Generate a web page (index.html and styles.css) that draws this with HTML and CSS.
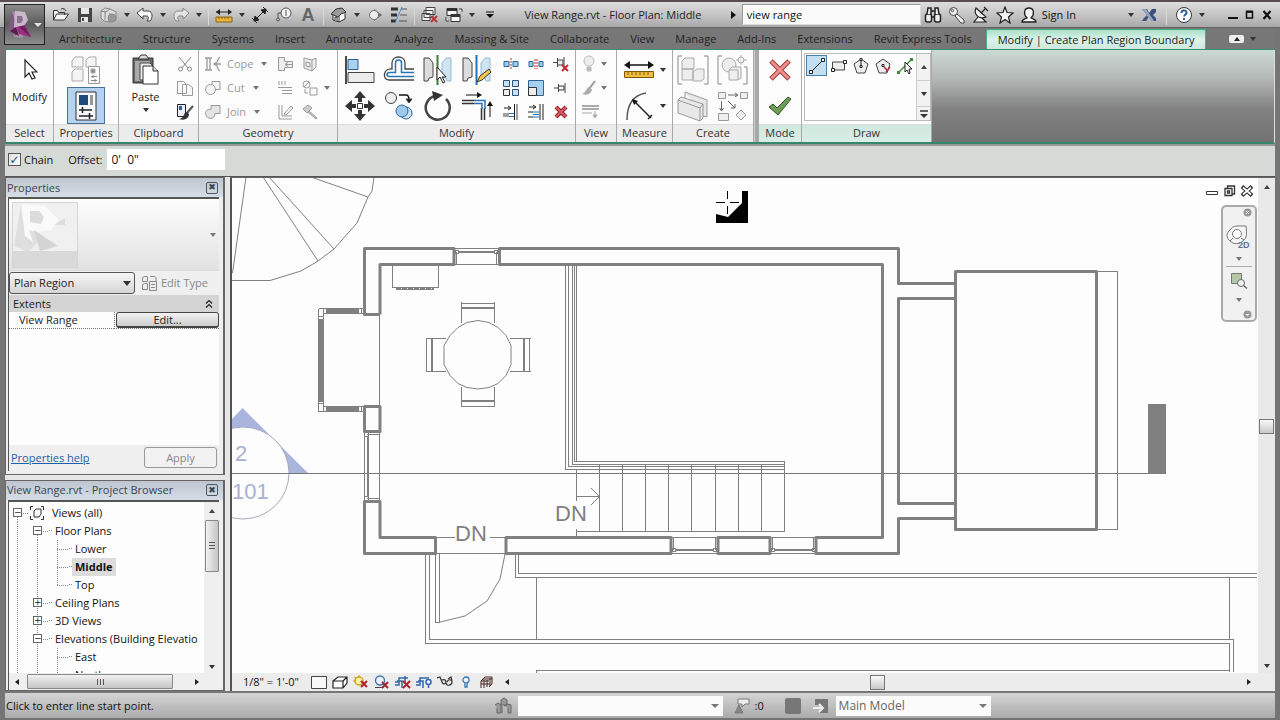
FILE: index.html
```html
<!DOCTYPE html>
<html lang="en">
<head>
<meta charset="utf-8">
<title>View Range.rvt - Floor Plan: Middle</title>
<link rel="stylesheet" href="styles.css">
</head>
<body>
<div class="app">
<button class="app-menu" aria-label="Application menu">
  <svg width="26" height="30" viewBox="0 0 26 30"><path d="M5 2l8-1 3 27-9-1z" fill="#a88fa8"/><path d="M5 2L1 19l8 7 2-8z" fill="#7d5c80"/><path d="M8 1l10 1 3 8-4 6-7 1 3 4-6-4z" fill="#c9b8ca"/><path d="M10 6l5 0 1 4-2 3-4 0z" fill="#8c7090"/><path d="M9 17l9-2 6 12-12-3z" fill="#9a2f80"/><path d="M9 17l3 9-9-5z" fill="#5a1c50"/><path d="M12 17l5-1 7 11z" fill="#6b1959"/></svg>
  <span class="caret light"></span>
</button>

<header class="titlebar">
  <div class="qat">
    <button class="qi" aria-label="Open"><svg width="18" height="16" viewBox="0 0 18 16" fill="none" stroke="#333"><path d="M1.500 13V3.500h4l1 2h6V8M1.500 13l3-6h12l-4 6z" fill="#f5f5f5"/><path d="M9 2c3-1 4 0 5 2"/></svg></button>
    <button class="qi" aria-label="Save"><svg width="16" height="16" viewBox="0 0 16 16"><path d="M1 1h14v14H1z" fill="#444"/><path d="M4 1h8v6H4z" fill="#e6e6e6"/><path d="M4 10h7v5H4z" fill="#e6e6e6"/><path d="M5 11h2v3H5z" fill="#444"/></svg></button>
    <button class="qi" aria-label="Synchronize"><svg width="18" height="18" viewBox="0 0 18 18" fill="#ddd" stroke="#888"><path d="M1 5l4-3 5 1 6 3v8l-6 2-6-1-3-3zM5 5v9M1 5l5 1 4-3M10 7v8"/><circle cx="12" cy="12" r="4" fill="#999"/></svg></button>
    <button class="qc" aria-label="Synchronize options"><span class="caret"></span></button>
    <button class="qi" aria-label="Undo"><svg width="18" height="16" viewBox="0 0 18 16" fill="#f8f8f8" stroke="#444"><path d="M1 6l6-5v3h5c5 0 5 7 2 10h-3c2-3 2-5-1-5H7v3z"/></svg></button>
    <button class="qc" aria-label="Undo list"><span class="caret"></span></button>
    <button class="qi" aria-label="Redo"><svg width="18" height="16" viewBox="0 0 18 16" fill="#e4e4e4" stroke="#888"><path d="M17 6l-6-5v3H6C1 4 1 11 4 14h3c-2-3-2-5 1-5h3v3z"/></svg></button>
    <button class="qc" aria-label="Redo list"><span class="caret"></span></button>
    <span class="qs"></span>
    <button class="qi" aria-label="Measure"><svg width="18" height="16" viewBox="0 0 18 16"><path d="M1 5h15" stroke="#222"/><path d="M1 5l4-3v6zM17 5l-4-3v6z" fill="#222"/><path d="M1 10h16v5H1z" fill="#e8b43c" stroke="#8a6410"/><path d="M4 10v2M7 10v2M10 10v2M13 10v2" stroke="#8a6410"/></svg></button>
    <button class="qc" aria-label="Measure options"><span class="caret"></span></button>
    <button class="qi" aria-label="Aligned dimension"><svg width="18" height="18" viewBox="0 0 18 18" stroke="#222" fill="#222"><path d="M3 15L15 3M1 12l5 5M12 1l5 5"/><path d="M3 15l1-5 4 4zM15 3l-1 5-4-4z"/></svg></button>
    <button class="qi" aria-label="Tag"><svg width="18" height="16" viewBox="0 0 18 16" fill="none" stroke="#555"><circle cx="11" cy="6" r="5" fill="#f4f4f4"/><path d="M11 3v6M6 6H3v5"/><circle cx="3" cy="12.500" r="1.500"/></svg></button>
    <button class="qi" aria-label="Text"><span class="glyph-a">A</span></button>
    <span class="qs"></span>
    <button class="qi" aria-label="Default 3D view"><svg width="18" height="16" viewBox="0 0 18 16" fill="#fafafa" stroke="#333"><path d="M3 6v7l6 2 6-3V6"/><path d="M1 7l5-5 6-1 4 4-5 2-3 3z" fill="#999"/><path d="M9 15V9M5 13v-3h2v4"/></svg></button>
    <button class="qc" aria-label="3D view options"><span class="caret"></span></button>
    <button class="qi" aria-label="Section"><svg width="16" height="14" viewBox="0 0 16 14"><path d="M7 1l8 6-8 6z" fill="#666"/><circle cx="7" cy="7" r="4.500" fill="#eee" stroke="#777"/></svg></button>
    <button class="qi" aria-label="Thin lines"><svg width="18" height="16" viewBox="0 0 18 16"><path d="M1 2h7M1 8h6M1 14h5" stroke="#333" stroke-width="3"/><path d="M11 2h6M10 8h7M9 14h8" stroke="#555"/><path d="M12 0L5 16" stroke="#4a8cc8"/></svg></button>
    <span class="qs"></span>
    <button class="qi" aria-label="Close hidden windows"><svg width="18" height="17" viewBox="0 0 18 17" fill="#f3f3f3" stroke="#444"><path d="M5 1.500h9v7H5zM3 4.500h9v7H3zM1 7.500h8v7H1z"/><path d="M10 10l6 6M16 10l-6 6" stroke="#b8323c" stroke-width="2"/></svg></button>
    <button class="qi" aria-label="Switch windows"><svg width="18" height="16" viewBox="0 0 18 16" fill="#f6f6f6" stroke="#333"><path d="M2 1.500h10v7H2zM6 7.500h9v7H6z"/><path d="M2 3h10M6 9h9" stroke-width="2"/><path d="M1 10v4h3M17 5V2h-3"/></svg></button>
    <button class="qc" aria-label="Window list"><span class="caret"></span></button>
    <button class="qi" aria-label="Customize toolbar"><svg width="8" height="8" viewBox="0 0 8 8"><path d="M0 1h8" stroke="#111"/><path d="M0 3h8L4 7z" fill="#111"/></svg></button>
  </div>
  <h1 class="doc-title">View Range.rvt - Floor Plan: Middle</h1>
  <button class="expand" aria-label="Expand search"><svg width="6" height="8" viewBox="0 0 6 8"><path d="M1 0l5 4-5 4z" fill="#111"/></svg></button>
  <input class="search" type="text" value="view range" aria-label="Search">
  <div class="info">
    <button class="qi" aria-label="Find"><svg width="18" height="18" viewBox="0 0 18 18" fill="#eee" stroke="#222" stroke-width="1.500"><rect x="1.500" y="8" width="6" height="8" rx="2"/><rect x="10.500" y="8" width="6" height="8" rx="2"/><path d="M3 8l1-6h3v6M15 8l-1-6h-3v6M7 5h4M7 11h4"/></svg></button>
    <button class="qi" aria-label="Subscription"><svg width="18" height="18" viewBox="0 0 18 18" fill="#f2f2f2" stroke="#444"><path d="M8 9l1-1 7 6v3h-3l-6-7z"/><circle cx="5.500" cy="5.500" r="4"/><circle cx="4.500" cy="4.500" r="1.200"/></svg></button>
    <button class="qi" aria-label="Communication"><svg width="18" height="18" viewBox="0 0 18 18" fill="#f2f2f2" stroke="#222" stroke-width="1.200"><path d="M6 11l-4 5h12l-4-4"/><path d="M4 2c-3 6 3 12 10 9z"/><path d="M9 7l4-4M12 1l4 4"/></svg></button>
    <button class="qi" aria-label="Favorites"><svg width="18" height="18" viewBox="0 0 18 18" fill="#f5f5f5" stroke="#222" stroke-width="1.200"><path d="M9 1l2 5.500 6 .5-4.500 4L14 17l-5-3.500L4 17l1.500-6L1 7l6-.5z"/></svg></button>
    <button class="sign"><svg width="18" height="18" viewBox="0 0 18 18" fill="#f5f5f5" stroke="#222" stroke-width="1.300"><path d="M2 16c0-3 3-3 5-4-4-4-3-10 2-10s6 6 2 10c2 1 5 1 5 4z"/></svg>Sign In</button>
    <button class="qc push" aria-label="Account options"><span class="caret"></span></button>
    <button class="qi" aria-label="Exchange"><svg width="16" height="14" viewBox="0 0 16 14"><path d="M1 1h5l2 4 3-4h4v3l-3 3 3 3v3h-4L8 9l-3 4H1l2-3 3-3z" fill="#3d527c"/><path d="M1 1h4l8 12h-3z" fill="#93a3c0"/></svg></button>
    <span class="qs"></span>
    <button class="qi" aria-label="Help"><svg width="18" height="18" viewBox="0 0 18 18"><circle cx="9" cy="9" r="7.500" fill="#fff" stroke="#333"/><path d="M6.500 7c0-4 5.500-3 5 0-.2 1.500-2.300 1.500-2.300 3.500M9 12v2" fill="none" stroke="#2b5c9b" stroke-width="2"/></svg></button>
    <button class="qc" aria-label="Help options"><span class="caret"></span></button>
    <button class="win first" aria-label="Minimize"><svg width="10" height="12"><path d="M0 9h10" stroke="#111" stroke-width="2"/></svg></button>
    <button class="win" aria-label="Maximize"><svg width="10" height="12"><path d="M1.500 3h6v6h-6z" fill="none" stroke="#111" stroke-width="1.500"/><path d="M1 2.500h7" stroke="#111" stroke-width="2"/></svg></button>
    <button class="win" aria-label="Close"><svg width="10" height="12"><path d="M1.500 2l7 8M8.500 2l-7 8" stroke="#111" stroke-width="2.200"/></svg></button>
  </div>
</header>

<nav class="tabs">
  <button>Architecture</button><button>Structure</button><button>Systems</button><button>Insert</button><button>Annotate</button><button>Analyze</button><button>Massing &amp; Site</button><button>Collaborate</button><button>View</button><button>Manage</button><button>Add-Ins</button><button>Extensions</button><button>Revit Express Tools</button><button class="active">Modify | Create Plan Region Boundary</button>
  <button class="ribbon-toggle" aria-label="Minimize ribbon"><span class="pill"><svg width="6" height="4"><path d="M0 4l3-4 3 4z" fill="#222"/></svg></span><span class="caret"></span></button>
</nav>

<section class="ribbon">
  <div class="panel p-select"><div class="body">
    <button class="tall"><svg width="16" height="24" viewBox="0 0 16 24" fill="#fff" stroke="#222" stroke-width="1.200"><path d="M3 2v17l4-4 3 6 3-1-3-6h5z"/></svg><span>Modify</span></button>
  </div><h2>Select</h2></div>

  <div class="panel p-props"><div class="body rows2">
    <button aria-label="Type properties"><svg width="30" height="30" viewBox="0 0 30 30" fill="#f4f4f4" stroke="#aaa"><path d="M1 6l3-4h8v10H1zM15 5l3-3h7v10H15zM1 17l3-3h8v12H1z"/><path d="M17.500 11.500h11v17h-11z" fill="#fff" stroke="#999"/><path d="M20 14h4v4h-4z" fill="#888"/><path d="M20 21.500h6M20 25.500h6M22 20v3M24 24v3" stroke="#888"/></svg></button>
    <button class="on" aria-label="Properties"><svg width="22" height="30" viewBox="0 0 22 30"><path d="M1 1h20v28H1z" fill="#f7f9fb" stroke="#333"/><path d="M4 4h9v10H4z" fill="#1d4a7d"/><path d="M15 4h3v10h-3z" fill="#999"/><path d="M4 19h13M4 25h14M7.500 16v6M14.500 22v6" stroke="#222" stroke-width="1.500"/></svg></button>
  </div><h2>Properties</h2></div>

  <div class="panel p-clip"><div class="body">
    <button class="tall"><svg width="28" height="32" viewBox="0 0 28 32"><path d="M1 4h20v25H1z" fill="#666" stroke="#333"/><path d="M6 5l3-4h5l3 4z" fill="#ddd" stroke="#333"/><path d="M3 7h15v20H3z" fill="#aaa"/><path d="M8 9h10l3 3v14H8z" fill="#eee" stroke="#444"/><path d="M11 12h10l5 5v13H11z" fill="#fff" stroke="#333"/><path d="M21 12v5h5" fill="#ddd" stroke="#333"/></svg><span>Paste</span><span class="caret"></span></button>
    <div class="rows3">
      <button aria-label="Cut"><svg width="16" height="16" viewBox="0 0 16 16" fill="none" stroke="#888"><path d="M2 1l9 11M14 1L5 12"/><circle cx="3.500" cy="13" r="2"/><circle cx="12.500" cy="13" r="2"/></svg></button>
      <button aria-label="Copy"><svg width="18" height="16" viewBox="0 0 18 16" fill="#fafafa" stroke="#999"><path d="M1.500 1.500h6l3 3v9h-9zM6.500 4.500h6l4 3v8h-10z"/></svg></button>
      <button aria-label="Match type"><svg width="18" height="18" viewBox="0 0 18 18"><path d="M1.500 1.500h8v12h-8z" fill="#eef" stroke="#222"/><path d="M3 3h3v4H3z" fill="#2e5c95"/><path d="M17 3l-7 8" stroke="#555" stroke-width="2"/><path d="M11 9c-4 0-2 6-8 7 6 2 10-1 10-5z" fill="#333"/></svg></button>
    </div>
  </div><h2>Clipboard</h2></div>

  <div class="panel p-geom"><div class="body dim">
    <div class="rows3 words">
      <button><svg width="18" height="16" viewBox="0 0 18 16" fill="none" stroke="#999" stroke-width="1.300"><path d="M1 2h7M1 14h7M3 2v12M6 2v12M16 1c-3 2-2 4-3 5l-3 2 3 2c1 1 0 4 3 5M17 8h-6"/></svg><span>Cope</span><i class="caret"></i></button>
      <button><svg width="18" height="16" viewBox="0 0 18 16" fill="#f4f4f4" stroke="#999"><path d="M8 1.500h8v8H8z"/><circle cx="6.500" cy="9.500" r="5"/></svg><span>Cut</span><i class="caret"></i></button>
      <button><svg width="18" height="16" viewBox="0 0 18 16" fill="#e4e4e4" stroke="#999"><path d="M7 1.500h9v8h-5c0 7-9 6-9.500 0 0-3 3-5 5.500-4z"/></svg><span>Join</span><i class="caret"></i></button>
    </div>
    <div class="rows3">
      <button aria-label="Join roof"><svg width="16" height="16" viewBox="0 0 16 16" fill="#eee" stroke="#999"><path d="M1.500 1.500h6v4h8v6h-8v3h-6zM15 8.500H8l3-2M8 8.500l3 2"/></svg></button>
      <button aria-label="Beam joins"><svg width="16" height="16" viewBox="0 0 16 16" fill="none" stroke="#999"><path d="M2 1v4M5 1v4M8 1v4M1 7.500h14M5 10.500h10M5 13.500h10"/></svg></button>
      <button aria-label="Wall joins"><svg width="16" height="16" viewBox="0 0 16 16" fill="none" stroke="#999"><path d="M2 1v14h13M5 1v11h10M7 10l7-8 2 2-7 7z"/></svg></button>
    </div>
    <div class="rows3">
      <button aria-label="Split face"><svg width="16" height="16" viewBox="0 0 16 16" fill="#eee" stroke="#999"><path d="M2 2l8 2 4-2v9l-4 4-8-3zM10 4v11M4 6l4 1v4l-4-1z"/></svg></button>
      <button aria-label="Demolish"><svg width="16" height="16" viewBox="0 0 16 16" fill="#fafafa" stroke="#999"><circle cx="4.500" cy="4.500" r="3.500"/><path d="M2 7l5-5M3 9v4h3M8 8h7v7H8z"/></svg></button>
      <button aria-label="Paint"><svg width="16" height="16" viewBox="0 0 16 16" fill="#ccc" stroke="#999"><path d="M1 5l5-4 4 3-5 5zM7 7l8 7-1 1-8-7z"/></svg></button>
    </div>
    <div class="rows3 narrow"><i></i><button aria-label="Demolish options"><span class="caret grey"></span></button><i></i></div>
  </div><h2>Geometry</h2></div>

  <div class="panel p-modify"><div class="body">
    <div class="big4">
      <button aria-label="Align"><svg width="32" height="30" viewBox="0 0 32 30"><path d="M2 1v28" stroke="#111" stroke-width="1.500"/><path d="M4 4.500h10v10H4z" fill="#a9d3f0" stroke="#2c5f8e"/><path d="M4 17.500h26v10H4z" fill="#ececec" stroke="#444"/></svg></button>
      <button aria-label="Offset"><svg width="32" height="30" viewBox="0 0 32 30" fill="none"><path d="M31 14h-9V8c0-8-13-8-13 0v6C0 13-1 25 6 25h25" stroke="#444" stroke-width="1.300"/><path d="M31 17.500H18.500V8c0-4-6-4-6 0v9.500H7c-4 0-4 4 0 4h24" stroke="#2474b8" stroke-width="1.500"/></svg></button>
      <button aria-label="Mirror - pick axis"><svg width="32" height="30" viewBox="0 0 32 30"><path d="M2 3h5l4 5v14l-4 1-1 3H2z" fill="#ddd" stroke="#444"/><path d="M29 3h-5l-4 5v14l4 1 1 3h4z" fill="#cfe4f3" stroke="#9bbbd2"/><path d="M15.500 0v30" stroke="#3b7d39" stroke-width="2"/><path d="M15 12v13l3-3 3 6 2-1-3-5h4z" fill="#fff" stroke="#222"/></svg></button>
      <button aria-label="Mirror - draw axis"><svg width="32" height="30" viewBox="0 0 32 30"><path d="M2 3h5l4 5v14l-4 1-1 3H2z" fill="#ddd" stroke="#444"/><path d="M29 3h-5l-4 5v14l4 1 1 3h4z" fill="#cfe4f3" stroke="#9bbbd2"/><path d="M15.500 0v30" stroke="#2474b8" stroke-width="2"/><path d="M16 27l3-6 9-7 2 3-9 8z" fill="#f2c74a" stroke="#333"/></svg></button>
      <button aria-label="Move"><svg width="32" height="32" viewBox="0 0 32 32" fill="#333"><path d="M16 1l6 7h-4v4h-4V8h-4zM16 31l6-7h-4v-4h-4v4h-4zM1 16l7-6v4h4v4H8v4zM31 16l-7-6v4h-4v4h4v4z"/><path d="M13.500 13.500h5v5h-5z" fill="#fff" stroke="#333"/></svg></button>
      <button aria-label="Copy"><svg width="32" height="30" viewBox="0 0 32 30" stroke="#444"><circle cx="8" cy="7" r="5.500" fill="#eee"/><circle cx="23" cy="22" r="6" fill="#cde4f5" stroke="#2c6596"/><circle cx="19" cy="20" r="6" fill="#9dcaeb" stroke="#2c6596"/><path d="M16 4h7c2 0 3 2 3 5" fill="none" stroke="#111" stroke-width="1.500"/><path d="M23 8h6l-3 4z" fill="#111"/></svg></button>
      <button aria-label="Rotate"><svg width="32" height="32" viewBox="0 0 32 32"><path d="M24 9A12 12 0 1 1 13 6" fill="none" stroke="#444" stroke-width="2.500"/><path d="M10 1l11 4-9 6z" fill="#333"/></svg></button>
      <button aria-label="Trim to corner"><svg width="32" height="30" viewBox="0 0 32 30" fill="none"><path d="M1 9.500h12M1 12.500h12M20.500 17v12M23.500 17v12" stroke="#333" stroke-width="1.500"/><path d="M13 9.500h11V18M13 12.500h8V18" stroke="#2474b8" stroke-width="1.500"/><path d="M5 4h12M29 26V14" stroke="#111"/><path d="M16 1l5 3-5 3zM26 15l3-5 3 5z" fill="#111"/></svg></button>
    </div>
    <div class="small3">
      <button aria-label="Split element"><svg width="16" height="12" viewBox="0 0 16 12" fill="#9fcbed" stroke="#2d6495"><path d="M1 3.500h5v5H1zM10 3.500h5v5h-5z"/><path d="M8 0v12" stroke="#c02929" stroke-dasharray="2 1"/></svg></button>
      <button aria-label="Split with gap"><svg width="16" height="12" viewBox="0 0 16 12" fill="#9fcbed" stroke="#2d6495"><path d="M1 3.500h4v5H1zM11 3.500h4v5h-4z"/><path d="M7 1v10M9 1v10" stroke="#c02929" stroke-dasharray="2 1"/></svg></button>
      <button aria-label="Unpin"><svg width="16" height="16" viewBox="0 0 16 16" fill="#eee" stroke="#444"><path d="M0 6.500h4M4.500 2v9M5 4h5v5H5M11 1v10"/><path d="M9 9l6 6M15 9l-6 6" stroke="#c02933" stroke-width="2"/></svg></button>
      <button aria-label="Array"><svg width="16" height="16" viewBox="0 0 16 16" fill="#c6e1f5" stroke="#2a5177"><path d="M.5.5h6v6h-6zM9.500.5h6v6h-6zM9.500 9.500h6v6h-6z"/><path d="M.5 9.500h6v6h-6z" fill="#eee" stroke="#333"/></svg></button>
      <button aria-label="Scale"><svg width="16" height="16" viewBox="0 0 16 16"><path d="M.5.5h15v15H.5z" fill="#a6d0ef" stroke="#2d6495"/><path d="M.5 7.500h8v8h-8z" fill="#eee" stroke="#333"/></svg></button>
      <button aria-label="Pin"><svg width="14" height="12" viewBox="0 0 14 12" fill="#eee" stroke="#444"><path d="M0 6h4M4.500 2v8M5 4h5v4H5M11 1v10"/></svg></button>
      <button aria-label="Extend single"><svg width="16" height="16" viewBox="0 0 16 16" fill="none" stroke="#222"><path d="M1 4h6M5 2l3 2-3 2M11.500 0v16"/><path d="M14 0v16M0 10h6M0 12h6" stroke="#444"/><path d="M6 9.500h5M6 12.500h5" stroke="#2474b8"/></svg></button>
      <button aria-label="Extend multiple"><svg width="16" height="16" viewBox="0 0 16 16" fill="none" stroke="#222"><path d="M1 3h6M5 1l3 2-3 2M12 0v16M15 0v16M0 8h5M0 13h5"/><path d="M5 8h6M5 10.500h6M5 13h6" stroke="#2474b8"/></svg></button>
      <button aria-label="Delete"><svg width="14" height="14" viewBox="0 0 14 14"><path d="M2 2l10 10M12 2L2 12" stroke="#8f1d28" stroke-width="4"/><path d="M2 2l10 10M12 2L2 12" stroke="#de5b62" stroke-width="2"/></svg></button>
    </div>
  </div><h2>Modify</h2></div>

  <div class="panel p-view"><div class="body dim">
    <div class="rows3 words">
      <button aria-label="Hide"><svg width="14" height="18" viewBox="0 0 14 18" fill="#eee" stroke="#bbb"><circle cx="7" cy="6" r="5"/><path d="M5 12h4v4H5z" fill="#bbb"/></svg><i class="caret"></i></button>
      <button aria-label="Override"><svg width="14" height="16" viewBox="0 0 14 16"><path d="M13 1L7 9" stroke="#999" stroke-width="2"/><path d="M8 7c-4 0-3 5-8 7 6 2 9-1 10-4z" fill="#aaa"/></svg><i class="caret"></i></button>
      <button aria-label="Linework"><svg width="18" height="16" viewBox="0 0 18 16" stroke="#aaa" fill="#aaa"><path d="M0 2h17M0 5h17" stroke-width="2"/><path d="M0 9h10M13 7v5M11 11h4l-2 3z"/></svg></button>
    </div>
  </div><h2>View</h2></div>

  <div class="panel p-measure"><div class="body rows2">
    <button aria-label="Measure between"><svg width="30" height="20" viewBox="0 0 30 20"><path d="M2 5h26" stroke="#111" stroke-width="1.500"/><path d="M0 5l6-4v8zM30 5l-6-4v8z" fill="#111"/><path d="M.5 11.500h29v6H.5z" fill="#f0bd3e" stroke="#7c5a0d"/><path d="M4 12v3M8 12v3M12 12v3M16 12v3M20 12v3M24 12v3" stroke="#7c5a0d"/></svg><span class="caret"></span></button>
    <button aria-label="Radial dimension"><svg width="30" height="30" viewBox="0 0 30 30"><path d="M3 29C3 13 10 4 22 2" fill="none" stroke="#555" stroke-width="1.500"/><path d="M9 9l18 18M24 28l4-4" stroke="#222" stroke-width="1.500"/><path d="M8 8l6 2-4 4z" fill="#111"/></svg><span class="caret"></span></button>
  </div><h2>Measure</h2></div>

  <div class="panel p-create"><div class="body big2 dim">
    <button aria-label="Create assembly"><svg width="32" height="30" viewBox="0 0 32 30" fill="#eee" stroke="#aaa"><path d="M5 1H1v28h4M27 1h4v28h-4" fill="none" stroke="#888"/><path d="M5 6l3-3h9v11H5zM5 14h11v11H5zM16 17l4-3h7v10l-3 2h-8z"/></svg></button>
    <button aria-label="Create parts"><svg width="32" height="30" viewBox="0 0 32 30" fill="#eee" stroke="#aaa"><path d="M5 1H1v28h4M27 12h3v17h-4" fill="none" stroke="#888"/><circle cx="12" cy="10" r="7"/><path d="M12 15l3-3h9v11l-3 2h-9zM12 15h9v10"/><circle cx="24" cy="5" r="3"/><path d="M24 0v2M24 8v2M19 5h2M27 5h3"/></svg></button>
    <button aria-label="Create group"><svg width="32" height="32" viewBox="0 0 32 32" fill="#e8e8e8" stroke="#999"><path d="M8 2l22 8v17l-4-1M1 10l3-3 22 7v14l-3 3-22-8zM1 10l22 8v13M23 18l3-4M8 2v6"/></svg></button>
    <button aria-label="Create similar"><svg width="32" height="30" viewBox="0 0 32 30" fill="#eee" stroke="#999"><path d="M1.500 1.500h7v6h-7zM23.500 1.500h7v6h-7zM1.500 22.500h10v7h-10zM24 19l5 5-5 5-5-5z"/><path d="M11 4h9M18 2l3 2-3 2M4.500 10v9M2.500 17l2 3 2-3M11 10l7 7M18 13v4h-4" stroke="#666"/></svg></button>
  </div><h2>Create</h2></div>
  <div class="split"></div>

  <div class="panel p-mode ctx"><div class="body rows2">
    <button aria-label="Cancel edit mode"><svg width="24" height="24" viewBox="0 0 24 24"><path d="M3 3l18 18M21 3L3 21" stroke="#9e3b3f" stroke-width="5"/><path d="M3.500 3.500l17 17M20.500 3.500l-17 17" stroke="#f08d8d" stroke-width="3"/></svg></button>
    <button aria-label="Finish edit mode"><svg width="24" height="20" viewBox="0 0 24 20"><path d="M1 11l4-3 4 4L20 1l3 2L10 19z" fill="#6c9c55" stroke="#33532a"/></svg></button>
  </div><h2>Mode</h2></div>

  <div class="panel p-draw ctx"><div class="body">
    <div class="gallery">
      <div class="shapes">
      <button class="on" aria-label="Line"><svg width="16" height="16" viewBox="0 0 16 16"><path d="M1 15L15 1" stroke="#222"/><path d="M.5 12.500h3v3h-3zM12.500.5h3v3h-3z" fill="#fff" stroke="#222"/></svg></button>
      <button aria-label="Rectangle"><svg width="16" height="14" viewBox="0 0 16 14"><path d="M1.500 3h12v8h-12z" fill="#eee" stroke="#444"/><path d="M.5 9.500h3v3h-3zM12.500 1.500h3v3h-3z" fill="#fff" stroke="#222"/></svg></button>
      <button aria-label="Inscribed polygon"><svg width="16" height="16" viewBox="0 0 16 16"><path d="M8 1l7 5-3 9H4L1 6z" fill="#eee" stroke="#444"/><path d="M8 2v6" stroke="#222"/><path d="M7 7.500h2v2H7zM7 .5h2v2H7z" fill="#fff" stroke="#222"/></svg></button>
      <button aria-label="Circumscribed polygon"><svg width="16" height="16" viewBox="0 0 16 16"><path d="M8 1l7 5-3 9H4L1 6z" fill="#eee" stroke="#444"/><path d="M7 6.500h2v2H7z" fill="#fff" stroke="#222"/><path d="M9 9l4 4M11 14l4-5" stroke="#b22a35" stroke-width="1.500"/></svg></button>
      <button aria-label="Pick lines"><svg width="16" height="16" viewBox="0 0 16 16"><path d="M1 15L15 1" stroke="#3b8a36" stroke-width="1.500"/><path d="M0 13h3v3H0zM13 0h3v3h-3z" fill="#3b8a36"/><path d="M8 4v10l2-2 2 4 1-1-1-4h3z" fill="#fff" stroke="#222"/></svg></button>
      </div>
      <div class="gscroll">
        <button aria-label="Scroll up"><i class="caret up"></i></button>
        <button aria-label="Scroll down"><i class="caret"></i></button>
        <button aria-label="More"><svg width="8" height="8" viewBox="0 0 8 8"><path d="M0 1h8" stroke="#333" stroke-width="1.500"/><path d="M0 4h8L4 8z" fill="#333"/></svg></button>
      </div>
    </div>
  </div><h2>Draw</h2></div>
</section>

<section class="options">
  <label class="chk"><input type="checkbox" checked><span>Chain</span></label>
  <label class="off" for="offset">Offset:</label><input id="offset" type="text" value="0'  0&quot;">
</section>

<main class="work">
  <aside class="dock">
    <section class="palette props">
      <header><h2>Properties</h2><button aria-label="Close properties">✖</button></header>
      <div class="frame">
        <div class="preview">
          <svg width="66" height="66" viewBox="0 0 66 66"><path d="M0 0h66v66H0z" fill="#f0f0f0"/><path d="M9 2L2 44l14 6 12-12z" fill="#dfdfdf"/><path d="M9 2l24 2 14 14-8 10-14 2-8-2 4 12-8-6z" fill="#fafafa"/><path d="M18 9h9l5 6-3 7-11-2z" fill="#dcdcdc"/><path d="M22 28l24 16-18 5z" fill="#d4d4d4"/><path d="M42 23l11-7v7z" fill="#dedede"/><path d="M0 49h66v17H0z" fill="#d9d9d9"/><path d="M.5.5h65v65H.5z" fill="none" stroke="#d6d6d6"/></svg>
          <span class="caret grey"></span>
        </div>
        <div class="typebar">
          <span class="combo"><select aria-label="Type filter"><option>Plan Region</option></select><i class="caret"></i></span>
          <button class="edit-type" disabled><svg width="16" height="16" viewBox="0 0 16 16" fill="#eee" stroke="#888"><path d="M1.500 2.500l2-1h3v5h-5zM9 1.500h5l1 1v4H9M1.500 9.500l2-1h3v6h-5zM8.500 6.500h7v9h-7zM10 9.500h4M10 12.500h4"/></svg>Edit Type</button>
        </div>
        <div class="group"><span>Extents</span><svg width="8" height="8" viewBox="0 0 8 8" fill="none" stroke="#222" stroke-width="1.200"><path d="M1 3.500l3-3 3 3M1 7.500l3-3 3 3"/></svg></div>
        <div class="prop"><span>View Range</span><div><button>Edit...</button></div></div>
        <div class="foot"><a href="#help">Properties help</a><button disabled>Apply</button></div>
      </div>
    </section>

    <section class="palette browser">
      <header><h2>View Range.rvt - Project Browser</h2><button aria-label="Close browser">✖</button></header>
      <div class="frame">
        <div class="treewrap">
          <ul class="tree">
            <li><i class="c start h"><b class="bx">−</b></i><svg class="vi" width="14" height="14" viewBox="0 0 14 14" fill="none" stroke="#333"><path d="M3 .5H.5V4M11 .5h2.500V4M.5 10v3.500H3M13.500 10v3.500H11M4 5l2-2h5v5l-2 3H4z"/></svg><span>Views (all)</span></li>
            <li><i class="c v"></i><i class="c start h"><b class="bx">−</b></i><i class="t"></i><span>Floor Plans</span></li>
            <li><i class="c v"></i><i class="c v"></i><i class="c v h"></i><i class="s"></i><span>Lower</span></li>
            <li><i class="c v"></i><i class="c v"></i><i class="c v h"></i><i class="s"></i><span class="cur">Middle</span></li>
            <li><i class="c v"></i><i class="c v"></i><i class="c last h"></i><i class="s"></i><span>Top</span></li>
            <li><i class="c v"></i><i class="c v h"><b class="bx">+</b></i><i class="t"></i><span>Ceiling Plans</span></li>
            <li><i class="c v"></i><i class="c v h"><b class="bx">+</b></i><i class="t"></i><span>3D Views</span></li>
            <li><i class="c v"></i><i class="c v h"><b class="bx">−</b></i><i class="t"></i><span>Elevations (Building Elevatio</span></li>
            <li><i class="c v"></i><i class="c v"></i><i class="c v h"></i><i class="s"></i><span>East</span></li>
            <li><i class="c v"></i><i class="c v"></i><i class="c v h"></i><i class="s"></i><span>North</span></li>
          </ul>
          <div class="vs"><i class="caret up"></i><span class="thumb"></span><i class="caret"></i></div>
        </div>
        <div class="hs"><i class="caret left"></i><span class="thumb"></span><i class="caret right"></i></div>
      </div>
    </section>
  </aside>

  <section class="view">
    <div class="stage">
      <div class="canvas">
        <svg class="plan" width="100%" height="100%" role="img" aria-label="Floor plan">
          <g transform="translate(-232 -178)" fill="none" stroke="#808080">
            <path d="M246 177L232.500 273M263 177L318 261M269 177L334 249M311 177L368 197M374 177L372 191L368 197L357 223L334 249L318 261L301 271L270 280.500H232"/>
            <path fill="#aab5de" stroke="none" d="M242.500 408l65.500 65H232v-54z"/>
            <circle cx="243" cy="473" r="46" fill="#fdfdfd" stroke="#a7aabd"/>
            <text x="235" y="461" class="mark">2</text><text x="232" y="499" class="mark">101</text>
            <path stroke="#777" d="M232 473.500H1166"/>
            <path fill="#808080" stroke="none" d="M1148 404h18v70h-18z"/>
            <g stroke-width="3" stroke-linejoin="round">
              <path d="M380 314.500H364.500V248.500H454V264.500H380V314.500"/>
              <path d="M955 283.500H898.500V248.500H499.500V264.500H882.500V537.500H816V553.500H898.500V518.500H955M955 298.500H898.500V503.500H955"/>
              <path d="M364.500 406.500H380V431.500H364.500z"/>
              <path d="M364.500 501.500H380V537.500H435.500V553.500H364.500z"/>
              <path d="M506 537.500H671V553.500H506zM718 537.500H770V553.500H718z"/>
              <path d="M955.500 271.500H1096.500V529.500H955.500z"/>
            </g>
            <g class="crisp">
              <path d="M1097 271.500H1117.500V529.500H1097"/>
              <path d="M454 248.500H499M454 264.500H499M456.500 252V264M496.500 252V264M455.500 250.500h3v3h-3zM494.500 250.500h3v3h-3z"/>
              <path stroke-width="2" d="M458 252H495"/>
              <path d="M392.500 265V287.500H438.500V265M396 289.500H434"/><path stroke-width="2" stroke-dasharray="5 1" d="M396 289H434"/>
              <path d="M318.500 308.500H364M318.500 308.500V411.500H364M323.500 313.500H364M323.500 313.500V406.500H364M379.500 315V406M323.500 308.500v5M326.500 308.500v5M361.500 308.500v5M323.500 406.500v5M326.500 406.500v5M361.500 406.500v5M318.500 316.500h5M318.500 403.500h5"/>
              <path stroke-width="4" d="M321 319V402M327 311H359M327 409H359"/>
              <path d="M364.500 432V501M379.500 432V501M367 434.500h12M367 498.500h12M364.500 432.500h4v4h-4zM364.500 496.500h4v4h-4z"/><path stroke-width="2" d="M368 436V497"/>
              <path d="M671 537.500H718M671 553.500H718M673.500 538V550M715.500 538V550M770 537.500H816M770 553.500H816M772.500 538V550M813.500 538V550M672.500 548.500h3v3h-3zM713.500 548.500h3v3h-3zM771.500 548.500h3v3h-3zM812.500 548.500h3v3h-3z"/><path stroke-width="2" d="M676 550H713M775 550H812"/>
              <path d="M565.500 265V469.500H784.500M568.500 265V466.500H784.500M572.500 265V464.500H784.500M574.500 265V461.500H784.500V531.500H576.500M576.500 265V461"/>
              <path d="M576.500 469V501M576.500 529V536M599.500 464V531M622.500 464V531M645.500 464V531M668.500 464V531M691.500 464V531M715.500 464V531M738.500 464V531M761.500 464V531M576.500 496.500H599"/>
              <path d="M435.500 537.500H455M490 537.500H506M435 553.500H506M435.500 554V622.500H439.500V554"/>
              <path d="M425.500 554V643.500H1229.500V672M429.500 554V639.500H1233.500V672M515.500 554V577.500H1257M518.500 554V573.500H1257M536.500 577V639M1229.500 577V639M536.500 673V670.500H1229"/>
              <path d="M461.500 323V309M494.500 323V309M461.500 387V400M494.500 387V400M446 338.500H433M446 371.500H433M510 338.500H523M510 371.500H523"/>
              <path d="M461.500 302V308M494.500 302V308M461.500 303.500H494.500M461.500 401V407M494.500 401V407M461.500 406.500H494.500M425.500 338.500H431M425.500 371.500H431M426.500 338V371M524 338.500H531M524 371.500H531M529.500 338V371"/>
              <path stroke-width="2" d="M461 308H495M461 401H495M432 338V372M524 338V372"/>
            </g>
            <path d="M591 488L599.500 496.500L591 505M505 554L500 579L487 601L465 616L440 622"/>
            <path fill="#fdfdfd" d="M478 320.500l11 2 9 5 8 8 5 10v19l-5 11-8 8-9 4-11 1.500-11-1.500-9-4-8-8-6-11v-19l6-10 8-8 9-5z"/>
            <text x="555" y="521" class="dn">DN</text><text x="455" y="541" class="dn">DN</text>
            <path stroke="none" fill="#000" d="M742 191h6v32h-32v-9l12 3 14-14z"/>
            <path class="crisp" stroke="#000" d="M716 202.500h9M730 202.500h9M727.500 191v8M727.500 206v8"/>
          </g>
        </svg>
        <div class="mdi">
          <button aria-label="Minimize view"><svg width="14" height="12"><path d="M1.500 6.500h11v3h-11z" fill="#fff" stroke="#333"/></svg></button>
          <button aria-label="Restore view"><svg width="12" height="12" fill="#fff" stroke="#333" stroke-width="1.300"><path d="M3.500 1h7v8h-7z"/><path d="M1 3.500h7v7H1zM3.500 6h2v2h-2z"/></svg></button>
          <button aria-label="Close view"><svg width="12" height="12"><path d="M1 1.500l10 9M11 1.500l-10 9" stroke="#333" stroke-width="4"/><path d="M2 2.500l8 7M10 2.500l-8 7" stroke="#fff" stroke-width="1.700"/></svg></button>
        </div>
        <div class="navbar">
          <button class="end" aria-label="Close navigation bar"><svg width="9" height="9"><circle cx="4.500" cy="4.500" r="4" fill="#999"/><path d="M3 3l3 3M6 3L3 6" stroke="#fff"/></svg></button>
          <button aria-label="Steering wheel"><svg width="26" height="24" viewBox="0 0 26 24"><path d="M4 5c3-5 8-4 16-4 1 8 1 12-3 15-4 3-9 4-13 0-4-3-4-8 0-11z" fill="#f5f5f5" stroke="#777"/><circle cx="11" cy="9" r="4.500" fill="#fff" stroke="#777"/><path d="M7 13l-3 3M15 13l3 2" stroke="#777"/><text x="12" y="23" class="two-d">2D</text></svg></button>
          <button aria-label="Wheel options"><i class="caret grey"></i></button>
          <hr>
          <button aria-label="Zoom region"><svg width="18" height="18" viewBox="0 0 18 18"><path d="M1.500 1.500h10v10h-10z" fill="#b5c9a8" stroke="#777"/><circle cx="11" cy="11" r="3.500" fill="#f2f2f2" stroke="#666"/><path d="M13.500 13.500l3.500 3" stroke="#666" stroke-width="1.500"/></svg></button>
          <button aria-label="Zoom options"><i class="caret grey"></i></button>
          <button class="end" aria-label="Navigation bar settings"><svg width="9" height="9"><circle cx="4.500" cy="4.500" r="4" fill="#999"/><path d="M2.500 4h4L4.500 6z" fill="#fff"/></svg></button>
        </div>
      </div>
      <div class="vscroll"><i class="caret up"></i><span class="knob"></span><i class="caret"></i></div>
    </div>
    <div class="viewbar">
      <button class="scale">1/8" = 1'-0"</button>
      <div class="vicons">
        <button aria-label="Detail level"><svg width="16" height="13"><path d="M.5.5h15v12H.5z" fill="#f8f8f8" stroke="#444"/></svg></button>
        <button aria-label="Visual style"><svg width="16" height="13" fill="#fff" stroke="#222" stroke-width="1.200"><path d="M1 5l5-4h9v6l-4 5H1zM1 5h10v7M11 5l4-4"/></svg></button>
        <button aria-label="Sun path"><svg width="16" height="14"><circle cx="6" cy="6" r="4" fill="#fff2a8" stroke="#d0a018" stroke-width="1.500"/><path d="M6 0v2M0 6h2M1 2l2 1" stroke="#d0a018"/><path d="M8 6l6 6M14 6l-6 6" stroke="#a8242c" stroke-width="2"/></svg></button>
        <button aria-label="Shadows"><svg width="16" height="14"><circle cx="6" cy="5.500" r="4.500" fill="#eaf2fa" stroke="#3c72ad" stroke-width="1.300"/><path d="M1 12.500h7" stroke="#444"/><path d="M8 7l6 6M14 7l-6 6" stroke="#a8242c" stroke-width="2"/></svg></button>
        <button aria-label="Crop view"><svg width="16" height="14" fill="none"><path d="M0 10h4V3h9M7 13V6H2M0 7h3M10 1v6" stroke="#2f69a8" stroke-width="1.500"/><path d="M8 6l7 7M15 6l-7 7" stroke="#a8242c" stroke-width="2"/></svg></button>
        <button aria-label="Show crop region"><svg width="16" height="14" fill="none" stroke="#2f69a8" stroke-width="1.500"><path d="M0 10h4V3h9M7 13V6H2M0 7h3"/><circle cx="12.500" cy="7" r="2.500" fill="#fff"/><path d="M12.500 10v3"/></svg></button>
        <button aria-label="Temporary hide"><svg width="16" height="14" fill="none" stroke="#333" stroke-width="1.200"><path d="M0 3l3-1 2 5c1 3 4 2 4 0s-2-3-4-2M9 8c1 4 6 2 6-1s-4-3-5 0M11 4l3-2 1 4"/></svg></button>
        <button aria-label="Reveal hidden"><svg width="10" height="14" fill="#eef6ff" stroke="#3578b8" stroke-width="1.300"><circle cx="5" cy="5" r="3"/><path d="M4 8v4h2V8"/></svg></button>
        <button aria-label="Worksharing display"><svg width="14" height="14" fill="none" stroke="#422"><path d="M1 6l4-4h7v7l-3 3M1 6v7M4 5v8M7 5v7M10 3v8M1 6h8M1 9h9M3 4h9"/></svg></button>
      </div>
      <div class="hscroll"><i class="caret left"></i><span class="knob"></span><i class="caret right"></i></div>
    </div>
  </section>
</main>

<footer class="status">
  <p>Click to enter line start point.</p>
  <button class="sb" aria-label="Worksets"><svg width="18" height="18" viewBox="0 0 18 18" fill="#999" stroke="#666"><path d="M1 8l3-2 3 2v8H3v-5M7 3l3-2 3 2v5H7zM10 9l3-2 4 1v8h-3v-5M8 9v7"/></svg></button>
  <span class="combo ws"><select aria-label="Active workset"><option></option></select><i class="caret grey"></i></span>
  <button class="sb filter"><svg width="16" height="18" viewBox="0 0 16 18" fill="#888" stroke="#777"><path d="M1 16l4-8 4 8z"/><path d="M4 2h11v5h-4l-3 3V7H4z" fill="#eee"/></svg>:0</button>
  <button class="sb" aria-label="Design options"><svg width="18" height="18"><rect x="1" y="1" width="16" height="16" rx="2" fill="#777"/></svg></button>
  <button class="sb" aria-label="Edit option"><svg width="18" height="18"><path d="M3 2h13v14H8V8H3z" fill="#777"/><path d="M1 11h9M7 7l4 4-4 4" stroke="#eee" stroke-width="2" fill="none"/></svg></button>
  <span class="combo mm"><select aria-label="Design option"><option>Main Model</option></select><i class="caret grey"></i></span>
</footer>
</div>
</body>
</html>
```
FILE: styles.css
```css
* { box-sizing: border-box; }
html, body { height: 100%; }
body { margin: 0; font: 12px/16px "Open Sans", "Noto Sans", sans-serif; color: #222; }
h1, h2, p, ul { margin: 0; padding: 0; font-weight: 400; font-size: inherit; }
button, input, select { font: inherit; color: inherit; margin: 0; padding: 0; border: 0; background: none; border-radius: 0; }
button { display: flex; align-items: center; justify-content: center; }
svg { display: block; flex: none; }

.app { position: relative; height: 100vh; min-height: 480px; display: flex; flex-direction: column; overflow: hidden; background: #757575; padding: 0 5px 2px 5px; border-top: 2px solid #554f53; }

.caret { display: block; flex: none; width: 0; height: 0; border: 3px solid transparent; border-top: 4px solid #333; border-bottom: 0; }
.caret.up { border-top: 0; border-bottom: 4px solid #444; }
.caret.left { border: 3px solid transparent; border-right: 4px solid #222; border-left: 0; }
.caret.right { border: 3px solid transparent; border-left: 4px solid #222; border-right: 0; }
.caret.grey { border-top-color: #777; }
.caret.light { border-width: 4px 4px 0; border-top-color: #e4e4e4; }

.app-menu { position: absolute; left: 4px; top: 2px; z-index: 3; width: 41px; height: 41px; gap: 1px; border: 1px solid #222; background: linear-gradient(#8a8a8a, #5b5b5b 50%, #8e8e8e); }

.titlebar { flex: none; display: flex; align-items: center; height: 26px; margin: 0 -5px; padding: 0 5px 0 49px; background: linear-gradient(#dedede, #c0c0c0 60%, #a8a8a8); border-bottom: 1px solid #626262; }
.qat, .info { display: flex; align-items: center; height: 100%; }
.qi { width: 24px; height: 24px; }
.qc { width: 12px; height: 24px; }
.qs { width: 1px; height: 20px; margin: 0 3px; background: #aaa; border-right: 1px solid #d8d8d8; }
.info .qs { margin: 0 5px; }
.glyph-a { font: bold 18px/18px "Liberation Sans", sans-serif; color: #666; }
.doc-title { flex: 1; text-align: center; font-size: 11px; white-space: nowrap; color: #222; }
.expand { width: 18px; height: 24px; }
.search { width: 179px; height: 21px; padding: 1px 4px; font-size: 11px; background: #fafafa; border: 1px solid #999; border-right-color: #ddd; border-bottom-color: #ddd; color: #111; }
.sign { gap: 4px; padding-left: 3px; font-size: 11px; color: #111; }
.push { margin-left: 49px; }
.win { width: 17px; height: 24px; }
.win.first { margin-left: 16px; }

.tabs { flex: none; display: flex; align-items: flex-end; gap: 1px; height: 22px; padding-left: 44px; background: #777; border-bottom: 1px solid #3a9070; font-size: 11px; }
.tabs button { height: 20px; padding: 0 10px; color: #222; white-space: nowrap; }
.tabs .active { margin-left: 3px; padding: 0 11px; background: linear-gradient(#a9dfc9, #ddf3ea 50%, #cde9dd); border: 1px solid #46ae85; border-bottom: 0; }
.tabs .ribbon-toggle { gap: 6px; margin-left: 12px; }
.pill { display: grid; place-items: center; width: 15px; height: 8px; background: #eee; border-radius: 2px; }

.ribbon { flex: none; display: flex; height: 94px; border: 1px solid #35866a; border-top: 0; border-right-color: #ddd; border-bottom-width: 2px; background: linear-gradient(#cbdad4, #b5b9b7 30%, #808080 65%, #737373); font-size: 12px; }
.panel { display: flex; flex-direction: column; border-right: 1px solid #aaa; background: #fcfcfc; }
.panel h2 { height: 18px; line-height: 15px; text-align: center; font-size: 11px; color: #333; background: #ececec; border-top: 1px solid #ddd; }
.panel .body { flex: 1; display: flex; padding: 2px 0 0; }
.panel.ctx h2 { background: linear-gradient(#cfe8de, #d9eee6); }
.split { width: 5px; background: #a8a8a8; border-left: 1px solid #ccc; }
.tall { flex-direction: column; justify-content: flex-start; font-size: 11px; }
.dim { color: #999; }
.rows2 { flex-direction: column; }
.rows2 button { flex: 1; }
.rows3 { display: grid; grid-template-rows: repeat(3, 24px); align-content: center; width: 25px; }
.rows3.narrow { width: 10px; }
.rows3.words { width: auto; }
.words button { justify-content: flex-start; gap: 5px; font-size: 11px; }
.words .caret { margin-left: 3px; border-top-color: #777; }

.p-select { width: 48px; }
.p-select .tall { width: 100%; padding-top: 6px; gap: 7px; }
.p-props { width: 65px; }
.p-props .body { align-items: center; }
.p-props button { width: 38px; }
.p-props .on { background: #b5d3f0; border: 1px solid #4a7299; }
.p-clip { width: 80px; }
.p-clip .tall { width: 53px; padding-top: 2px; gap: 3px; }
.p-geom { width: 139px; }
.p-geom .words { width: 73px; padding-left: 5px; }
.p-modify { width: 238px; }
.big4 { display: grid; grid-template-columns: repeat(4, 39px); grid-template-rows: 1fr 1fr; padding-left: 2px; }
.small3 { display: grid; grid-template-columns: repeat(3, 25px); grid-template-rows: repeat(3, 24px); align-content: center; padding-left: 2px; }
.p-view { width: 41px; }
.p-view .words { padding-left: 6px; }
.p-view .words button { gap: 2px; }
.p-measure { width: 56px; }
.p-measure button { gap: 6px; }
.p-create { width: 81px; }
.panel .big2 { display: grid; grid-template-columns: 1fr 1fr; grid-template-rows: 1fr 1fr; }
.p-mode { width: 43px; }
.p-draw { width: 130px; }
.p-draw .body { padding: 3px 2px 3px; }
.gallery { flex: 1; display: flex; border: 1px solid #bbb; background: #fdfdfd; }
.shapes { flex: 1; display: flex; align-items: flex-start; gap: 1px; padding: 1px; }
.shapes button { width: 21px; height: 21px; }
.shapes .on { background: #c3e0f3; border: 1px solid #4c7fa5; }
.gscroll { width: 14px; display: grid; grid-template-rows: 26px 26px 1fr; border-left: 1px solid #ccc; background: #f2f2f2; }
.gscroll button + button { border-top: 1px solid #ccc; }

.options { flex: none; display: flex; align-items: center; height: 33px; padding: 0 0 3px 3px; border-top: 2px solid #999; border-bottom: 1px solid #555; background: #d6dad7; font-size: 11px; color: #111; }
.chk { display: flex; align-items: center; gap: 3px; }
.chk input { appearance: none; width: 13px; height: 13px; border: 1px solid #555; background: linear-gradient(135deg, #ddd, #fff); display: grid; place-items: center; }
.chk input:checked::before { content: "✓"; font: bold 12px/12px "DejaVu Sans", sans-serif; color: #35457a; }
.off { margin: 0 4px 0 15px; }
.options input[type="text"] { width: 118px; height: 21px; padding: 0 5px; background: #fff; white-space: pre; font-size: 12px; }

.work { flex: 1; display: flex; min-height: 0; gap: 5px; background: #e6e6e6; }
.dock { flex: none; width: 220px; display: flex; flex-direction: column; gap: 5px; min-height: 0; font-size: 11px; }
.palette { display: flex; flex-direction: column; border: 1px solid #666; border-width: 1px 2px 1px 1px; background: #efefef; min-height: 0; }
.palette header { flex: none; height: 19px; display: flex; align-items: center; justify-content: space-between; padding: 0 5px 0 1px; background: linear-gradient(#bfc6cf, #d5dde6); color: #3b4653; }
.palette header button { width: 12px; height: 12px; border: 1px solid #4b5765; border-radius: 2px; font: 9px/9px "DejaVu Sans", sans-serif; }
.palette .frame { flex: 1; display: flex; flex-direction: column; min-height: 0; margin: 0 4px 0 2px; border: 2px solid #555; border-width: 2px 0 0 1px; background: #fdfdfd; }
.props { flex: 298 1 0; }
.browser { flex: 211 1 0; }
.props .frame { margin-bottom: 3px; }
.preview { flex: none; display: flex; align-items: center; justify-content: space-between; height: 71px; padding: 3px; background: linear-gradient(#fdfdfd, #e2e2e2); }
.typebar { flex: none; display: flex; align-items: center; height: 25px; background: #efefef; border-top: 1px solid #ddd; }
.combo { position: relative; display: block; }
.combo select { appearance: none; width: 100%; height: 100%; padding: 0 4px; }
.combo .caret { position: absolute; right: 4px; top: 50%; margin-top: -2px; pointer-events: none; border-width: 5px 4px 0; }
.typebar .combo { width: 126px; height: 22px; }
.typebar select { border: 1px solid #555; border-radius: 3px; background: linear-gradient(#f6f6f6, #d5d5d5); }
.edit-type { gap: 4px; margin-left: 6px; }
.edit-type, .foot button { color: #888; }
.group { flex: none; display: flex; align-items: center; justify-content: space-between; height: 17px; padding: 0 6px 0 4px; background: #d4d4d4; }
.prop { flex: 1; display: grid; grid-template-columns: 1fr 1fr; align-content: start; line-height: 16px; }
.prop > span { padding-left: 10px; border-bottom: 1px dotted #777; }
.prop > div { padding-left: 1px; border: 1px dotted #777; border-width: 0 0 1px 1px; }
.prop button { width: 100%; height: 16px; border: 1px solid #444; border-bottom-width: 2px; border-radius: 3px; background: linear-gradient(#f4f4f4, #ccc); }
.foot { flex: none; display: flex; align-items: center; justify-content: space-between; height: 26px; padding: 0 2px; background: #efefef; }
.foot a { color: #1f5fa8; }
.foot button { width: 73px; height: 21px; border: 1px solid #999; border-radius: 3px; background: #f2f2f2; }

.treewrap { flex: 1; display: flex; min-height: 0; }
.tree { flex: 1; min-width: 0; overflow: hidden; list-style: none; padding-top: 2px; }
.tree li { display: flex; align-items: center; height: 18px; white-space: nowrap; color: #111; }
.c { flex: none; width: 20px; height: 18px; display: grid; place-items: center; padding-right: 3px; background-repeat: no-repeat; --v: repeating-linear-gradient(#888 0 1px, transparent 1px 2px); --h: repeating-linear-gradient(90deg, #888 0 1px, transparent 1px 2px); }
.c.v { background-image: var(--v); background-position: 8px 0; background-size: 1px 100%; }
.c.h { background-image: var(--h); background-position: 8px 9px; background-size: 12px 1px; }
.c.v.h { background-image: var(--v), var(--h); background-position: 8px 0, 8px 9px; background-size: 1px 100%, 12px 1px; }
.c.start.h { background-image: var(--v), var(--h); background-position: 8px 9px, 8px 9px; background-size: 1px 9px, 12px 1px; }
.c.last.h { background-image: var(--v), var(--h); background-position: 8px 0, 8px 9px; background-size: 1px 9px, 12px 1px; }
.bx { display: block; width: 9px; height: 9px; border: 1px solid #666; background: #fff; font: 9px/7px "DejaVu Sans", sans-serif; text-align: center; color: #222; }
.vi { margin: 0 5px 0 1px; }
.t, .s { flex: none; height: 1px; background: repeating-linear-gradient(90deg, #888 0 1px, transparent 1px 2px); }
.t { width: 3px; }
.s { width: 3px; }
.tree span { padding: 0 3px; line-height: 18px; }
.tree .cur { font-weight: 700; background: #dcdcdc; }
.vs { flex: none; width: 15px; display: flex; flex-direction: column; align-items: center; padding: 7px 0 4px; background: #efefef; }
.thumb { border: 1px solid #888; border-radius: 1px; }
.vs .thumb { width: 14px; height: 52px; margin: 7px 0 auto; background: linear-gradient(#555, #555) 3px 21px/6px 1px no-repeat, linear-gradient(#555, #555) 3px 24px/6px 1px no-repeat, linear-gradient(#555, #555) 3px 27px/6px 1px no-repeat, linear-gradient(90deg, #f2f2f2, #c4c4c4); }
.hs { flex: none; height: 17px; display: flex; align-items: center; padding: 0 20px 0 6px; background: #efefef; }
.hs .thumb { width: 146px; height: 15px; margin: 0 auto 0 8px; background: linear-gradient(#555, #555) 69px 4px/1px 6px no-repeat, linear-gradient(#555, #555) 72px 4px/1px 6px no-repeat, linear-gradient(#555, #555) 75px 4px/1px 6px no-repeat, linear-gradient(#f2f2f2, #c4c4c4); }

.view { flex: 1; min-width: 0; display: flex; flex-direction: column; border-left: 2px solid #555; border-top: 1px solid #666; }
.stage { flex: 1; min-height: 0; display: flex; }
.canvas { position: relative; flex: 1; min-width: 0; overflow: hidden; background: #fdfdfd; }
.plan { width: 100%; height: 100%; }
.crisp { shape-rendering: crispEdges; }
.plan text { stroke: none; font-family: "Liberation Sans", sans-serif; font-size: 22px; }
.dn { fill: #808080; }
.mark { fill: #a9b1d2; }
.mdi { position: absolute; right: 5px; top: 7px; display: flex; gap: 5px; }
.navbar { position: absolute; right: 1px; top: 27px; width: 36px; display: flex; flex-direction: column; align-items: center; gap: 5px; padding: 1px 3px; border: 2px solid #aaa; border-radius: 5px; background: #f1f1f1; }
.navbar .end { align-self: flex-end; }
.navbar hr { width: 26px; margin: 0; border: 0; border-top: 1px solid #aaa; }
.navbar button + button { padding-top: 3px; }
.navbar .two-d { font: bold 9px "Liberation Sans", sans-serif; fill: #6d6d8a; }
.vscroll { flex: none; width: 17px; display: flex; flex-direction: column; align-items: center; justify-content: space-between; padding: 7px 0 5px; background: #e9e9e9; }
.knob { width: 15px; height: 15px; border: 1px solid #777; background: linear-gradient(#fafafa, #c9c9c9); }
.viewbar { flex: none; height: 18px; display: flex; align-items: center; background: #ececec; }
.scale { padding-left: 11px; font-size: 11px; color: #111; }
.vicons { display: flex; margin-left: 10px; }
.vicons button { width: 21px; }
.hscroll { flex: 1; display: flex; align-items: center; justify-content: space-between; padding: 0 24px 0 7px; }

.status { flex: none; display: flex; align-items: center; gap: 2px; height: 27px; border-top: 2px solid #777; background: linear-gradient(#d4d4d4, #ababab); font-size: 11px; color: #111; }
.status p { width: 38%; padding-left: 1px; }
.sb { width: 26px; height: 22px; }
.status .combo { height: 20px; background: #fbfbfb; color: #666; }
.status .combo select { font-size: 12px; padding: 0 3px; }
.status .combo .caret { border-width: 4px 4px 0; }
.ws { width: 205px; margin-right: 2px; }
.filter { width: 44px; gap: 5px; margin-right: 7px; }
.mm { width: 155px; }
```
